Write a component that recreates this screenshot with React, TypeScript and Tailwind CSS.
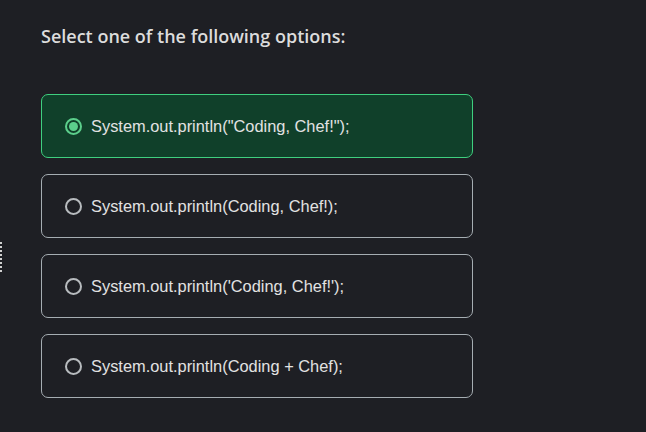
import React, { useState } from 'react';

const options = [
  'System.out.println("Coding, Chef!");',
  'System.out.println(Coding, Chef!);',
  "System.out.println('Coding, Chef!');",
  'System.out.println(Coding + Chef);',
];

const App: React.FC = () => {
  const [selected, setSelected] = useState(0);

  return (
    <div className="relative w-[646px] h-[432px] bg-[#1e1f24] overflow-hidden">
      {/* drag handle marks on the left edge */}
      <div className="absolute left-0 top-[242px] w-[2px] h-[30px] bg-[repeating-linear-gradient(to_bottom,#d0d0d0_0px,#d0d0d0_2px,transparent_2px,transparent_4px)]" />

      <div className="pl-[41px] pt-[24px]">
        <h2 className="text-[18px] font-semibold text-[#dcdcdc] font-['Open_Sans',sans-serif] leading-[24px]">
          Select one of the following options:
        </h2>

        <div className="mt-[46px] flex flex-col gap-[16px] w-[432px]">
          {options.map((opt, i) => {
            const active = selected === i;
            return (
              <button
                key={i}
                onClick={() => setSelected(i)}
                className={`h-[64px] flex items-center gap-[9px] px-[23px] rounded-[7px] border text-left ${
                  active
                    ? 'bg-[#10402a] border-[#3fcf7f]'
                    : 'bg-[#1e1f24] border-[#a5adb2]'
                }`}
              >
                <span
                  className={`w-[17px] h-[17px] rounded-full border-2 flex items-center justify-center shrink-0 ${
                    active ? 'border-[#5ccf8c]' : 'border-[#b8bcbf]'
                  }`}
                >
                  {active && <span className="w-[9px] h-[9px] rounded-full bg-[#5ccf8c]" />}
                </span>
                <span className="text-[16.4px] text-[#e2e2e2] font-['Liberation_Sans',Arial,sans-serif]">
                  {opt}
                </span>
              </button>
            );
          })}
        </div>
      </div>
    </div>
  );
};

export default App;
